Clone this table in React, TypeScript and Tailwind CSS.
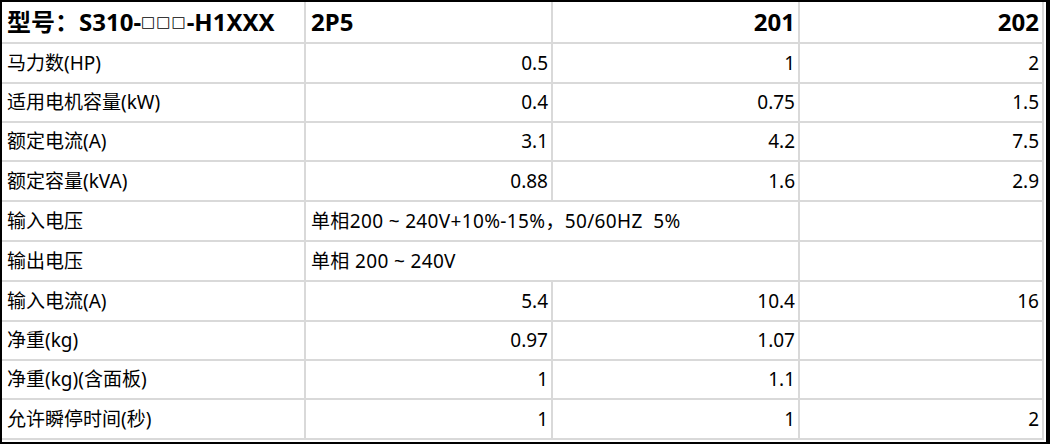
import React from "react";

const font = { fontFamily: '"Noto Sans", "Noto Sans CJK SC", sans-serif' };

type Row = { label: string; h: string; cells: (string | null)[]; merged?: string };

const rows: Row[] = [
  { label: "马力数(HP)", h: "h-[40px]", cells: ["0.5", "1", "2"] },
  { label: "适用电机容量(kW)", h: "h-[39px]", cells: ["0.4", "0.75", "1.5"] },
  { label: "额定电流(A)", h: "h-[39px]", cells: ["3.1", "4.2", "7.5"] },
  { label: "额定容量(kVA)", h: "h-[40px]", cells: ["0.88", "1.6", "2.9"] },
  { label: "输入电压", h: "h-[40px]", cells: [], merged: "单相200 ~ 240V+10%-15%，50/60HZ  5%" },
  { label: "输出电压", h: "h-[40px]", cells: [], merged: "单相 200 ~ 240V" },
  { label: "输入电流(A)", h: "h-[40px]", cells: ["5.4", "10.4", "16"] },
  { label: "净重(kg)", h: "h-[39px]", cells: ["0.97", "1.07", ""] },
  { label: "净重(kg)(含面板)", h: "h-[39px]", cells: ["1", "1.1", ""] },
  { label: "允许瞬停时间(秒)", h: "h-[40px]", cells: ["1", "1", "2"] },
];

const line = "border-[#d9d9d9]";

export default function App() {
  return (
    <div className="w-[1050px] h-[444px] bg-white text-black border-t-2 border-l-2 border-b-2 border-r-4 border-black pr-[2px] pb-[2px] overflow-hidden" style={font}>
      <div className="grid grid-cols-[304px_247px_247px_244px]">
        {/* header */}
        <div className={`h-[42px] border-r-2 border-b-2 ${line} flex items-center pl-[5px] text-[24px] font-bold whitespace-nowrap`}>
          型号：S310-<span className="font-normal text-[15px] tracking-[1px]" style={{ fontFamily: '"DejaVu Sans", sans-serif' }}>□□□</span>-H1XXX
        </div>
        <div className={`h-[42px] border-r-2 border-b-2 ${line} flex items-center pl-[5px] text-[24px] font-bold`}>2P5</div>
        <div className={`h-[42px] border-r-2 border-b-2 ${line} flex items-center justify-end pr-[3px] text-[24px] font-bold`}>201</div>
        <div className={`h-[42px] border-r-2 border-b-2 ${line} flex items-center justify-end pr-[3px] text-[24px] font-bold`}>202</div>
        {rows.map((r, i) => (
          <React.Fragment key={i}>
            <div className={`${r.h} border-r-2 border-b-2 ${line} flex items-center pl-[5px] text-[19px] whitespace-nowrap`}>{r.label}</div>
            {r.merged !== undefined ? (
              <>
                <div className={`${r.h} col-span-2 border-r-2 border-b-2 ${line} flex items-center pl-[5px] text-[19px] tracking-[0.35px] whitespace-pre`}>{r.merged}</div>
                <div className={`${r.h} border-r-2 border-b-2 ${line}`}></div>
              </>
            ) : (
              r.cells.map((c, j) => (
                <div key={j} className={`${r.h} border-r-2 border-b-2 ${line} flex items-center justify-end pr-[3px] text-[19px]`}>{c}</div>
              ))
            )}
          </React.Fragment>
        ))}
      </div>
    </div>
  );
}
